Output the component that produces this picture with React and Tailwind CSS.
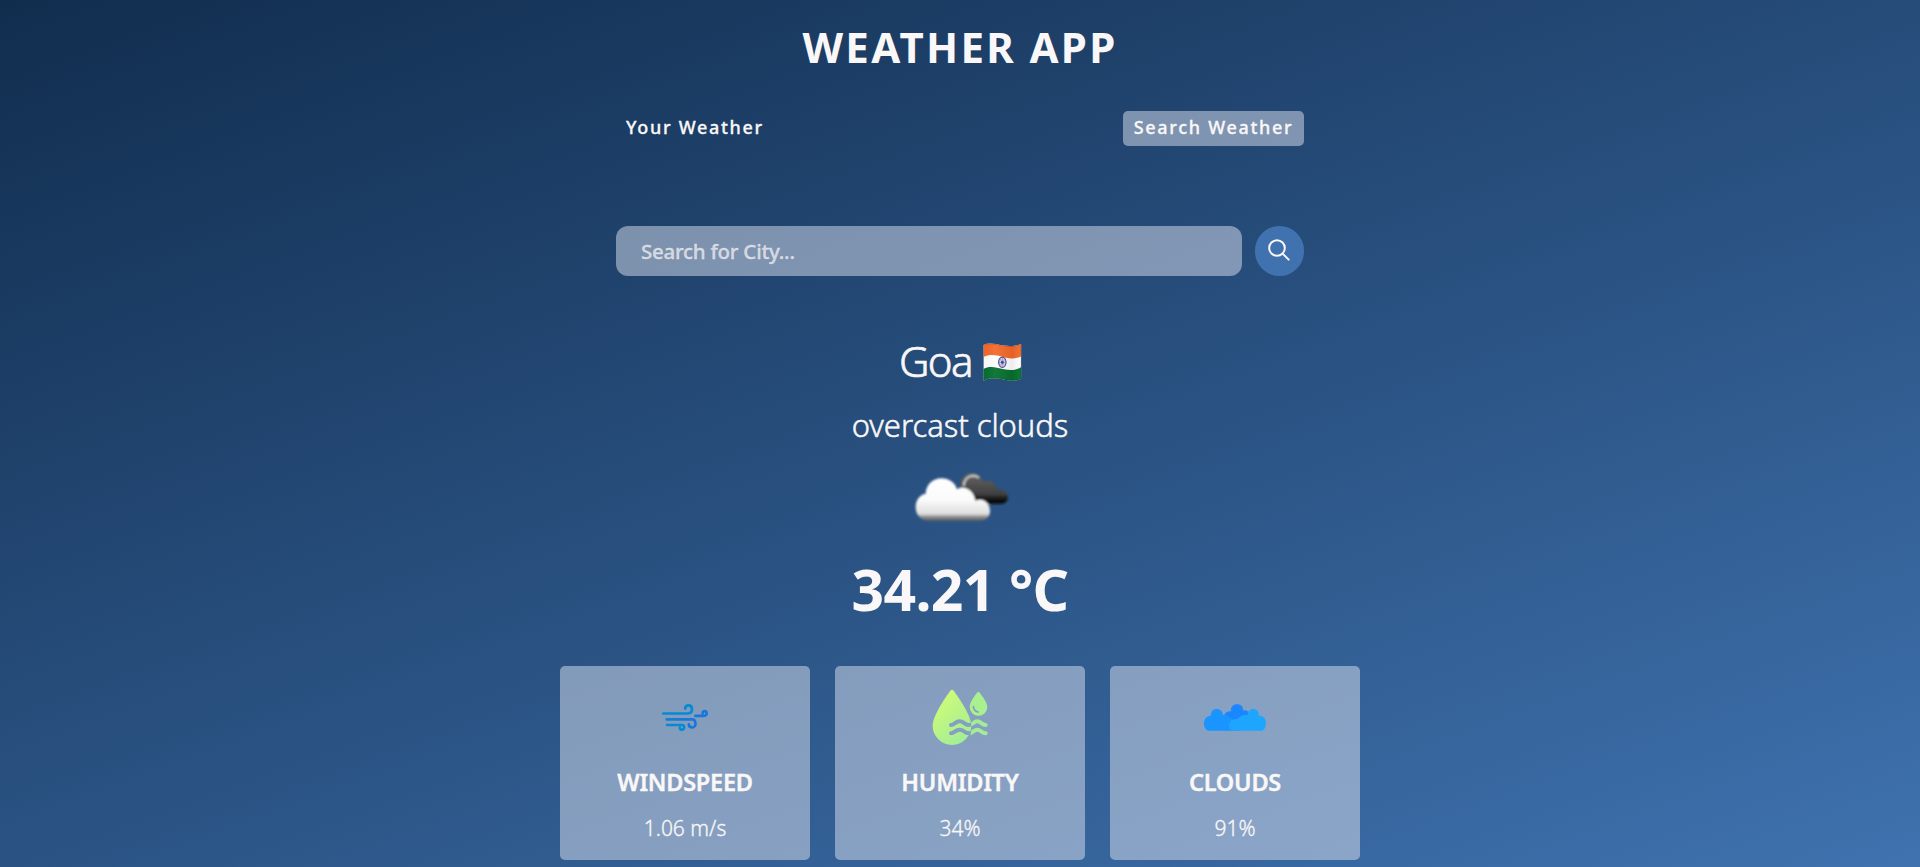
const WAVE = "M378 210 C388 210 391 199 404 199 S418 210 431 210 S446 199 457 199 S470 210 482 210";

function WindIcon() {
  return (
    <svg className="size-16" viewBox="309 90 192 192" fill="none" strokeWidth="8" strokeLinecap="round">
      <defs>
        <linearGradient id="wind" gradientUnits="userSpaceOnUse" x1="350" y1="0" x2="438" y2="0">
          <stop offset="0" stopColor="#1a7cd4" />
          <stop offset="1" stopColor="#1976dc" />
        </linearGradient>
      </defs>
      <path stroke="#058bd3" d="M340 175.500 H412 C422 175.500 426 169 426 163 C426 155 421 151 416 151 C410 151 405.500 155 405.500 161" />
      <path stroke="#1976dc" d="M436 182.500 H462 C467.500 182.500 470 179 470 175 C470 171 467 168.500 464 168.500 C460.500 168.500 458 171 458 175" />
      <path stroke="url(#wind)" d="M350 193 H426 C434 193 436.500 200 436.500 206 C436.500 213 432 217.500 427 217.500 C421 217.500 416.500 214 416.500 208" />
      <path stroke="#058bd3" d="M351 210 H396 C400.500 210 402.500 213 402.500 217 C402.500 221 399 224 396 224 C392 224 389.500 221 389.500 218" />
    </svg>
  );
}

function HumidityIcon() {
  return (
    <svg className="size-16" viewBox="309 90 192 192">
      <defs>
        <linearGradient id="drop" gradientUnits="userSpaceOnUse" x1="340" y1="130" x2="450" y2="250">
          <stop offset="0" stopColor="#cffb78" />
          <stop offset="1" stopColor="#9dec9a" />
        </linearGradient>
        <mask id="cut" maskUnits="userSpaceOnUse" x="309" y="90" width="192" height="192">
          <rect x="309" y="90" width="192" height="192" fill="#fff" />
          <g fill="none" stroke="#000" strokeWidth="12" strokeLinecap="round">
            <path d={WAVE} />
            <path d={WAVE} transform="translate(0 25)" />
          </g>
        </mask>
        <clipPath id="outside">
          <path d="M439 185 H500 V260 H431 L438 232 Z" />
        </clipPath>
      </defs>
      <path
        mask="url(#cut)"
        fill="url(#drop)"
        d="M376 107 Q381 102 386 107 C402 129 439 182 439 212 A58 58 0 0 1 323 212 C323 182 360 129 376 107 Z"
      />
      <path fill="#a9f08f" d="M457 112 Q460 109 463 112 C471 123 487 143 487 156 A26.500 26.500 0 0 1 434 156 C434 143 449 123 457 112 Z" />
      <path d="M445 155 Q447 169 460 171" fill="none" stroke="#87a0c2" strokeWidth="5" strokeLinecap="round" />
      <g clipPath="url(#outside)" fill="none" stroke="#a2ed96" strokeWidth="12" strokeLinecap="round">
        <path d={WAVE} />
        <path d={WAVE} transform="translate(0 25)" />
      </g>
    </svg>
  );
}

function CloudsIcon() {
  return (
    <svg className="size-16" viewBox="309 90 192 192">
      <path fill="#1a86ff" d="M372 182 C375 172 385 168 393 169 C391 156 400 148 411 148 C422 148 431 156 429 167 C437 163 446 168 448 176 L430 205 H385 Z" />
      <path fill="#1a94ff" d="M325 227 C316 225 311 214 312 202 C313 190 322 182 333 182 C331 170 340 162 350 162 C361 162 369 170 368 180 C378 177 388 182 391 190 L420 200 V227 Z" />
      <path fill="#1ea6ff" d="M401 227 C392 226 387 220 387 212 C387 203 394 193 406 193 C416 191 417 187 422 184 C429 179 437 180 443 181 C442 169 450 162 460 162 C470 162 478 170 476 182 C488 181 497 189 498 202 C498 213 495 224 487 227 Z" />
    </svg>
  );
}

function OvercastIcon() {
  return (
    <svg className="mt-4 h-[75px] w-[140px]" viewBox="0 0 420 225">
      <defs>
        <linearGradient id="light" x1="0" y1="0" x2="0" y2="1">
          <stop offset="0" stopColor="#ffffff" />
          <stop offset=".5" stopColor="#fbfbfb" />
          <stop offset=".84" stopColor="#dedede" />
          <stop offset=".91" stopColor="#8d8d8d" />
          <stop offset="1" stopColor="#626262" />
        </linearGradient>
        <linearGradient id="dark" x1="0" y1="0" x2="0" y2="1">
          <stop offset="0" stopColor="#666666" />
          <stop offset=".35" stopColor="#525252" />
          <stop offset=".68" stopColor="#404040" />
          <stop offset=".9" stopColor="#070707" />
          <stop offset="1" stopColor="#101010" />
        </linearGradient>
        <filter id="soft">
          <feGaussianBlur stdDeviation="2.5" />
        </filter>
      </defs>
      <g filter="url(#soft)">
        <path fill="url(#dark)" d="M208 76 C211 55 228 39 247 39 C262 39 274 49 279 64 C299 57 317 68 321 87 C340 87 354 97 354 111 C354 124 344 132 331 132 H240 Z" />
        <path d="M221 78 C222 60 233 48 248 47 C256 47 262 49 267 53" fill="none" stroke="#c9c9c9" strokeWidth="6" />
        <path fill="url(#light)" d="M118 182 C92 182 77 165 77 141 C77 121 89 104 107 101 C108 74 129 55 154 55 C177 55 195 67 201 88 C224 75 251 91 256 122 C281 113 300 130 300 153 C300 171 288 182 268 182 Z" />
      </g>
    </svg>
  );
}

function IndiaFlag() {
  return (
    <svg className="mt-[2px] h-[38px] w-[39px]" viewBox="428 38 117 114">
      <defs>
        <clipPath id="flag">
          <path d="M429 44 C442 38 456 39 470 42 S498 48 516 47 S535 43 543 40 V145 C530 152 513 152 498 149 S470 142 454 144 S436 149 429 152 Z" />
        </clipPath>
        <linearGradient id="shade" x1="0" y1="0" x2="1" y2="0">
          <stop offset="0" stopColor="#000" stopOpacity=".03" />
          <stop offset=".3" stopColor="#fff" stopOpacity=".06" />
          <stop offset=".75" stopColor="#000" stopOpacity=".07" />
          <stop offset="1" stopColor="#fff" stopOpacity=".04" />
        </linearGradient>
      </defs>
      <g clipPath="url(#flag)">
        <rect x="428" y="38" width="117" height="116" fill="#fff" />
        <path fill="#f4692b" d="M428 30 H545 V77 C530 85 512 86 497 82 S468 74 454 74 S436 77 428 81 Z" />
        <path fill="#06702f" d="M428 117 C440 109 456 109 470 112 S498 119 512 119 S535 115 545 109 V160 H428 Z" />
        <rect x="428" y="38" width="117" height="116" fill="url(#shade)" />
        <path fill="none" stroke="#000" strokeOpacity=".2" strokeWidth="4" d="M429 44 C442 38 456 39 470 42 S498 48 516 47 S535 43 543 40 V145 C530 152 513 152 498 149 S470 142 454 144 S436 149 429 152 Z" />
      </g>
      <ellipse cx="486" cy="96" rx="11" ry="15.500" fill="#d5d3e8" stroke="#504c92" strokeWidth="3.500" />
      <path stroke="#6d6aa5" strokeWidth="1.500" d="M486 82 V110 M476 96 H496 M479 86 L493 106 M493 86 L479 106" />
      <circle cx="486" cy="96" r="4" fill="#413d85" />
    </svg>
  );
}

function Card({ icon, title, value }) {
  return (
    <div className="flex h-[194px] w-[250px] flex-col items-center rounded-[5px] bg-[#dbe2ef]/50 pt-[19px]">
      {icon}
      <p className="mt-[18px] text-[23.500px] leading-[30px] font-semibold tracking-[-0.25px] uppercase [-webkit-text-stroke:0.4px]">{title}</p>
      <p className="mt-[18px] text-[21px] leading-[26px] font-light [-webkit-text-stroke:0.3px]">{value}</p>
    </div>
  );
}

export default function App() {
  return (
    <div className="h-[867px] w-full overflow-hidden bg-[linear-gradient(160deg,#112d4e_0%,#3f72af_100%)] pt-5 font-['Noto_Sans',sans-serif] text-[#f9f7f7]">
      <h1 className="text-center text-[42px] leading-[53px] font-bold tracking-[2.3px] uppercase">Weather App</h1>

      <div className="mx-auto mt-[38px] flex w-[688px] items-center justify-between">
        <button className="h-[35px] rounded-[5px] px-[10px] pb-[3px] text-[18px] font-medium tracking-[1.7px] [-webkit-text-stroke:0.3px]">Your Weather</button>
        <button className="h-[35px] w-[181px] rounded-[5px] bg-[#dbe2ef]/50 pb-[3px] text-[18px] font-medium tracking-[1.7px] whitespace-nowrap [-webkit-text-stroke:0.3px]">
          Search Weather
        </button>
      </div>

      <form className="mx-auto mt-20 flex w-[688px] items-center justify-between">
        <input
          className="h-[50px] w-[626px] rounded-[12px] bg-[#dbe2ef]/50 px-[25px] text-[20.500px] font-medium tracking-[-0.25px] placeholder:text-[#f9f7f7]/70 [-webkit-text-stroke:0.3px]"
          placeholder="Search for City..."
        />
        <button type="button" className="flex h-[50px] w-[49px] items-center justify-center rounded-full bg-[#3f72af] pr-[2px] pb-[3px]">
          <svg className="size-6" viewBox="500 413 72 72" fill="none" stroke="#f9f7f7" strokeWidth="6" strokeLinecap="round">
            <circle cx="530" cy="443" r="23.500" />
            <path d="M547.500 460.500 L565 478" />
          </svg>
        </button>
      </form>

      <div className="flex flex-col items-center">
        <div className="mt-[60px] flex h-[50px] items-center gap-[11px] pl-[1px]">
          <p className="text-[42px] leading-[50px] font-light tracking-[-1.600px] [-webkit-text-stroke:0.7px]">Goa</p>
          <IndiaFlag />
        </div>
        <p className="mt-5 text-[31px] leading-[38px] font-light tracking-[-0.05px] [-webkit-text-stroke:0.5px]">overcast clouds</p>
        <OvercastIcon />
        <p className="mt-[19px] text-[57px] leading-[70px] font-bold tracking-[-0.6px]">34.21 °C</p>
        <div className="mt-[42px] flex gap-[25px]">
          <Card icon={<WindIcon />} title="Windspeed" value="1.06 m/s" />
          <Card icon={<HumidityIcon />} title="Humidity" value="34%" />
          <Card icon={<CloudsIcon />} title="Clouds" value="91%" />
        </div>
      </div>
    </div>
  );
}
